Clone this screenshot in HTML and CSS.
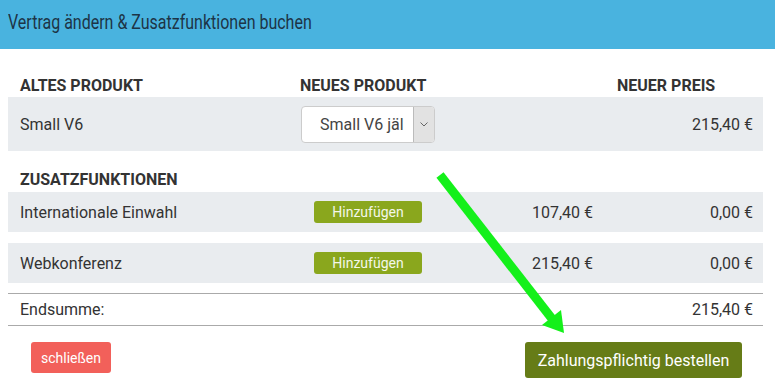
FILE: index.html
```html
<!DOCTYPE html>
<html lang="de">
<head>
  <meta charset="UTF-8" />
  <title>Vertrag ändern</title>
  <link rel="stylesheet" href="styles.css">
</head>
<body>
  <div class="modal">
    <div class="modal-head"><span class="title">Vertrag ändern &amp; Zusatzfunktionen buchen</span></div>

    <div class="modal-body">
      <div class="row heading">
        <div>ALTES PRODUKT</div>
        <div>NEUES PRODUKT</div>
        <div></div>
        <div class="new-price">NEUER PREIS</div>
      </div>

      <div class="row shaded tall">
        <div>Small V6</div>
        <div>
          <div class="select">
            <span class="select-text">Small V6 jäl</span>
            <span class="select-arrow">
              <svg width="8" height="5" viewBox="0 0 8 5"><path d="M0.5 0.5 L4 4 L7.5 0.5" fill="none" stroke="#666" stroke-width="1"/></svg>
            </span>
          </div>
        </div>
        <div></div>
        <div class="num">215,40 €</div>
      </div>

      <div class="row heading sub">
        <div>ZUSATZFUNKTIONEN</div>
      </div>

      <div class="row shaded">
        <div>Internationale Einwahl</div>
        <div><button class="btn-add">Hinzufügen</button></div>
        <div class="num">107,40 €</div>
        <div class="num">0,00 €</div>
      </div>

      <div class="row shaded">
        <div>Webkonferenz</div>
        <div><button class="btn-add">Hinzufügen</button></div>
        <div class="num">215,40 €</div>
        <div class="num">0,00 €</div>
      </div>

      <div class="row total">
        <div>Endsumme:</div>
        <div></div>
        <div></div>
        <div class="num">215,40 €</div>
      </div>
    </div>

    <div class="modal-foot">
      <button class="btn-close">schließen</button>
      <button class="btn-order">Zahlungspflichtig bestellen</button>
    </div>

    <svg class="arrow" width="775" height="389" viewBox="0 0 775 389">
      <line x1="440" y1="175" x2="553" y2="320" stroke="#14f01a" stroke-width="9"/>
      <polygon points="564,333 542,325 561,310" fill="#14f01a"/>
    </svg>
  </div>
</body>
</html>
```

FILE: styles.css
```css
body {
  margin: 0;
  font-family: Roboto, "Liberation Sans", sans-serif;
  color: #333;
  background: #fff;
}
.modal {
  position: relative;
  width: 775px;
  height: 389px;
  overflow: hidden;
}
.modal-head {
  height: 49px;
  box-sizing: border-box;
  background: #49b3df;
  color: #1d3446;
  padding: 10px 8px 0;
  white-space: nowrap;
}
.title {
  display: inline-block;
  font-size: 20px;
  transform: scaleX(0.8);
  transform-origin: left center;
}
.modal-body {
  padding: 0 12px 0 8px;
}
.row {
  display: grid;
  grid-template-columns: 280px 148px 145px 1fr;
  align-items: center;
  padding: 0 10px 0 12px;
  font-size: 16px;
}
.heading {
  font-weight: bold;
  line-height: 18px;
  padding-top: 28px;
  padding-bottom: 2px;
}
.heading.sub {
  padding-top: 20px;
  padding-bottom: 3px;
}
.new-price {
  padding-left: 24px;
}
.shaded {
  background: #e9ecef;
  height: 40px;
  margin-bottom: 11px;
}
.shaded.tall {
  height: 54px;
  margin-bottom: 0;
}
.num {
  text-align: right;
}
.select {
  display: flex;
  width: 134px;
  height: 37px;
  margin-left: 1px;
  box-sizing: border-box;
  background: #fff;
  border: 1px solid #ccc;
  border-radius: 4px;
  overflow: hidden;
}
.select-text {
  flex: 1;
  padding-left: 18px;
  line-height: 35px;
  white-space: nowrap;
  color: #444;
}
.select-arrow {
  width: 20px;
  display: flex;
  align-items: center;
  justify-content: center;
  background: #e2e2e2;
  border-left: 1px solid #bbb;
}
button {
  font-family: Roboto, "Liberation Sans", sans-serif;
  border: none;
  color: #fff;
  cursor: pointer;
}
.btn-add {
  width: 108px;
  height: 22px;
  margin-left: 14px;
  padding: 0;
  background: #8aa71d;
  border-radius: 3px;
  font-size: 14px;
  color: #f4f7ea;
}
.total {
  border-top: 1px solid #aaa;
  border-bottom: 1px solid #aaa;
  height: 33px;
  box-sizing: border-box;
  margin-top: -1px;
}
.modal-foot {
  display: flex;
  justify-content: space-between;
  align-items: flex-start;
  padding: 16px 33px 0 31px;
}
.btn-close {
  width: 80px;
  height: 31px;
  background: #f2605a;
  border-radius: 3px;
  font-size: 14px;
}
.btn-order {
  width: 217px;
  height: 36px;
  background: #667c17;
  border-radius: 3px;
  font-size: 16px;
}
.arrow {
  position: absolute;
  left: 0;
  top: 0;
  pointer-events: none;
}
```
